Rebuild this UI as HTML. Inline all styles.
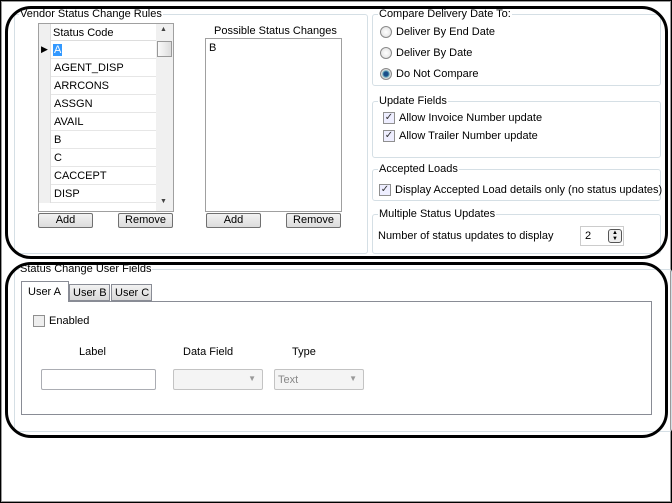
<!DOCTYPE html>
<html><head><style>
*{margin:0;padding:0;box-sizing:border-box}
body{width:672px;height:503px;background:#fff;font-family:"Liberation Sans",sans-serif;font-size:11px;color:#000;position:relative;overflow:hidden}
.a{position:absolute}
.gb{position:absolute;border:1px solid #d5dfe5;border-radius:3px}
.lbl{position:absolute;background:#fff;padding:0 1px;white-space:nowrap}
.btn{position:absolute;height:15px;border:1px solid #707070;border-radius:2px;background:linear-gradient(#f2f2f2,#dcdcdc);text-align:center;line-height:13px}
.row{position:absolute;left:0;width:117px;height:18px;border-bottom:1px solid #e6e6e6}
.rh{position:absolute;left:0;width:12px;height:18px;background:#f0f0f0;border-right:1px solid #ddd}
.rt{position:absolute;left:15px;top:3px}
.radio{position:absolute;width:12px;height:12px;border-radius:50%;border:1px solid #8a8a8a;background:radial-gradient(#fff,#ddd)}
.cb{position:absolute;width:12px;height:12px;border:1px solid #8f8f8f;background:#eef;font-size:10px;line-height:10px;text-align:center;color:#333}
</style></head><body>
<div class="a" style="left:0;top:0;width:672px;height:503px;border:1px solid #000"></div>
<div class="a" style="left:1px;top:1px;width:670px;height:501px;border:1px solid #999"></div>

<div class="gb" style="left:14px;top:14px;width:354px;height:240px"></div>
<div class="lbl" style="left:19px;top:8px">Vendor Status Change Rules</div>
<div class="a" style="left:38px;top:23px;width:136px;height:189px;border:1px solid #a0a0a0;background:#fff">
  <div class="a" style="left:0;top:0;width:117px;height:17px;background:#fff;border-bottom:1px solid #ddd"><div class="rh" style="height:17px"></div><div class="a" style="left:14px;top:3px">Status Code</div></div>
  <div class="a" style="left:117px;top:0;width:17px;height:187px;background:#f0f0f0"></div>
  <div class="a" style="left:121px;top:2px;font-size:7px;color:#444">▲</div>
  <div class="a" style="left:118px;top:17px;width:15px;height:16px;border:1px solid #999;background:linear-gradient(90deg,#fafafa,#ddd)"></div>
  <div class="a" style="left:121px;top:174px;font-size:7px;color:#444">▼</div>
  <div style="position:absolute;left:0;top:17px">
    <div class="row" style="top:0"><div class="rh"></div><div class="a" style="left:2px;top:3px;font-size:9px">▶</div><div class="rt" style="background:#3399ff;color:#fff;padding:0 1px;left:14px">A</div></div>
    <div class="row" style="top:18px"><div class="rh"></div><div class="rt">AGENT_DISP</div></div>
    <div class="row" style="top:36px"><div class="rh"></div><div class="rt">ARRCONS</div></div>
    <div class="row" style="top:54px"><div class="rh"></div><div class="rt">ASSGN</div></div>
    <div class="row" style="top:72px"><div class="rh"></div><div class="rt">AVAIL</div></div>
    <div class="row" style="top:90px"><div class="rh"></div><div class="rt">B</div></div>
    <div class="row" style="top:108px"><div class="rh"></div><div class="rt">C</div></div>
    <div class="row" style="top:126px"><div class="rh"></div><div class="rt">CACCEPT</div></div>
    <div class="row" style="top:144px"><div class="rh"></div><div class="rt">DISP</div></div>
  </div>
</div>
<div class="btn" style="left:38px;top:213px;width:55px">Add</div>
<div class="btn" style="left:118px;top:213px;width:55px">Remove</div>
<div class="a" style="left:214px;top:25px">Possible Status Changes</div>
<div class="a" style="left:205px;top:38px;width:137px;height:174px;border:1px solid #a0a0a0"><div class="a" style="left:3px;top:3px">B</div></div>
<div class="btn" style="left:206px;top:213px;width:55px">Add</div>
<div class="btn" style="left:286px;top:213px;width:55px">Remove</div>

<div class="gb" style="left:372px;top:14px;width:289px;height:72px"></div>
<div class="lbl" style="left:378px;top:8px">Compare Delivery Date To:</div>
<div class="radio" style="left:380px;top:26px"></div><div class="a" style="left:396px;top:26px">Deliver By End Date</div>
<div class="radio" style="left:380px;top:47px"></div><div class="a" style="left:396px;top:47px">Deliver By Date</div>
<div class="radio" style="left:380px;top:68px;background:radial-gradient(#1a4f8a 30%,#6ab 45%,#ddd 60%)"></div><div class="a" style="left:396px;top:68px">Do Not Compare</div>

<div class="gb" style="left:372px;top:101px;width:289px;height:57px"></div>
<div class="lbl" style="left:378px;top:95px">Update Fields</div>
<div class="cb" style="left:383px;top:112px">✓</div><div class="a" style="left:399px;top:112px">Allow Invoice Number update</div>
<div class="cb" style="left:383px;top:130px">✓</div><div class="a" style="left:399px;top:130px">Allow Trailer Number update</div>

<div class="gb" style="left:372px;top:169px;width:289px;height:32px"></div>
<div class="lbl" style="left:378px;top:163px">Accepted Loads</div>
<div class="cb" style="left:379px;top:184px">✓</div><div class="a" style="left:395px;top:184px">Display Accepted Load details only (no status updates)</div>

<div class="gb" style="left:372px;top:214px;width:289px;height:40px"></div>
<div class="lbl" style="left:378px;top:208px">Multiple Status Updates</div>
<div class="a" style="left:378px;top:230px">Number of status updates to display</div>
<div class="a" style="left:580px;top:226px;width:44px;height:20px;border:1px solid #ccc"><div class="a" style="left:4px;top:3px">2</div><div class="a" style="left:27px;top:2px;width:14px;height:14px;border:1px solid #555;border-radius:3px;font-size:6px;line-height:6px;text-align:center;background:#eee">▲<br>▼</div></div>

<div class="gb" style="left:14px;top:269px;width:658px;height:163px"></div>
<div class="lbl" style="left:19px;top:263px">Status Change User Fields</div>
<div class="a" style="left:21px;top:301px;width:631px;height:114px;border:1px solid #898c95;background:#fff"></div>
<div class="a" style="left:21px;top:281px;width:48px;height:21px;border:1px solid #898c95;border-bottom:none;background:#fff;padding:4px 0 0 6px">User A</div>
<div class="a" style="left:69px;top:284px;width:41px;height:17px;border:1px solid #898c95;background:linear-gradient(#f2f2f2,#d8d8d8);padding:2px 0 0 3px;white-space:nowrap">User B</div>
<div class="a" style="left:111px;top:284px;width:41px;height:17px;border:1px solid #898c95;background:linear-gradient(#f2f2f2,#d8d8d8);padding:2px 0 0 3px;white-space:nowrap">User C</div>
<div class="cb" style="left:33px;top:315px;background:#eee"></div><div class="a" style="left:49px;top:315px">Enabled</div>
<div class="a" style="left:79px;top:346px">Label</div>
<div class="a" style="left:183px;top:346px">Data Field</div>
<div class="a" style="left:292px;top:346px">Type</div>
<div class="a" style="left:41px;top:369px;width:115px;height:21px;border:1px solid #abadb3;border-radius:2px"></div>
<div class="a" style="left:173px;top:369px;width:90px;height:21px;border:1px solid #c3c3c3;border-radius:2px;background:#f4f4f4"><div class="a" style="right:6px;top:4px;font-size:8px;color:#999">▼</div></div>
<div class="a" style="left:274px;top:369px;width:90px;height:21px;border:1px solid #c3c3c3;border-radius:2px;background:#f4f4f4"><div class="a" style="left:3px;top:4px;color:#888">Text</div><div class="a" style="right:6px;top:4px;font-size:8px;color:#999">▼</div></div>

<div class="a" style="left:5px;top:6px;width:663px;height:253px;border:3px solid #000;border-radius:26px"></div>
<div class="a" style="left:5px;top:262px;width:663px;height:176px;border:3px solid #000;border-radius:26px"></div>
</body></html>
